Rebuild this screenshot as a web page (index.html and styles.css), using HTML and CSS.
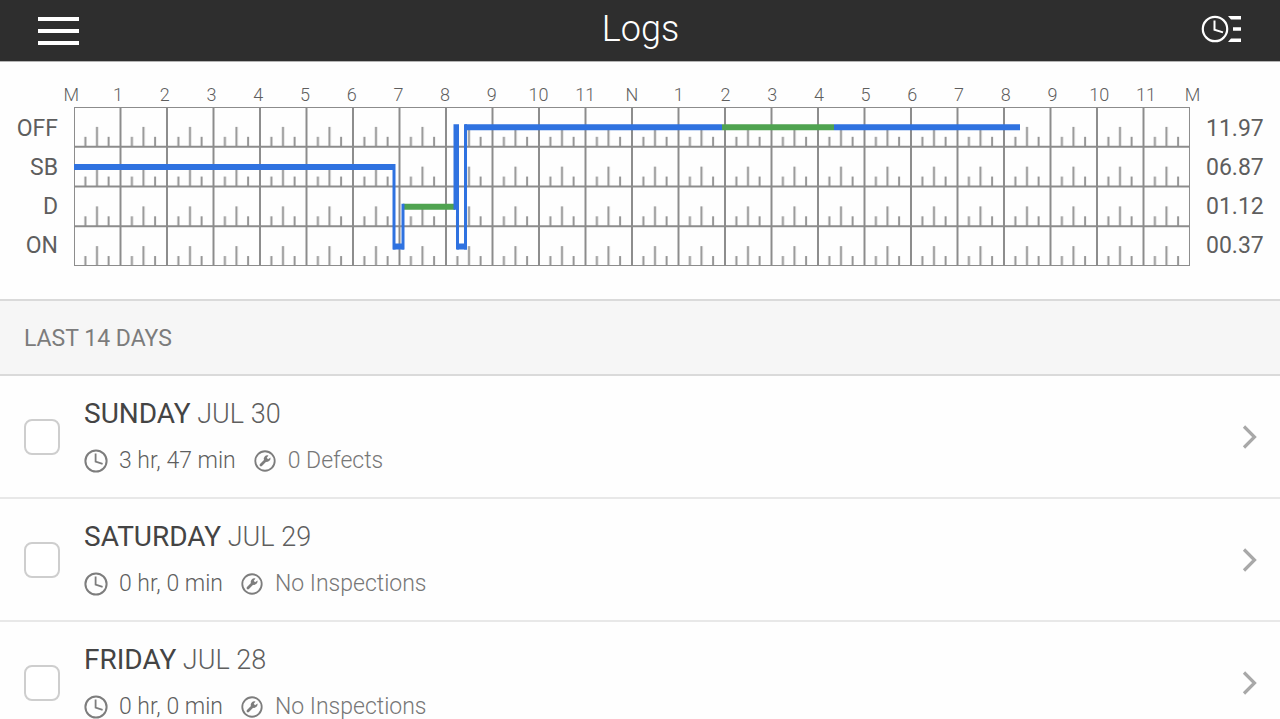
FILE: index.html
```html
<!DOCTYPE html>
<html lang="en">
  <head>
    <meta charset="UTF-8" />
    <meta name="viewport" content="width=device-width, initial-scale=1.0" />
    <title>Logs</title>
    <link rel="stylesheet" href="styles.css">
  </head>
  <body>
    <!-- Shared icons -->
    <svg class="icon-defs" aria-hidden="true">
      <symbol id="icon-clock" viewBox="0 0 24 24">
        <circle cx="12" cy="12" r="10.6" fill="none" stroke="currentColor" stroke-width="2" />
        <path d="M11.6 4.6V12.6L18.6 14.8" fill="none" stroke="currentColor" stroke-width="1.8" />
      </symbol>
      <symbol id="icon-wrench" viewBox="0 0 24 24">
        <circle cx="12" cy="12" r="10.6" fill="none" stroke="currentColor" stroke-width="2" />
        <path d="M7.6 16.4L13 11" fill="none" stroke="currentColor" stroke-width="3" stroke-linecap="round" />
        <path d="M15.8 5.9L13.9 8.5L15.3 10L18 8.2A4 4 0 0 1 12.4 12.6L10.9 11.2A4 4 0 0 1 15.8 5.9Z" fill="currentColor" />
      </symbol>
      <symbol id="icon-chevron" viewBox="0 0 16 26">
        <path d="M2 2.5L12.5 13L2 23.5" fill="none" stroke="currentColor" stroke-width="3.2" />
      </symbol>
    </svg>

    <header class="top-bar">
      <button class="menu-button" type="button" aria-label="Menu">
        <span></span>
        <span></span>
        <span></span>
      </button>
      <h1>Logs</h1>
      <button class="status-button" type="button" aria-label="Change status">
        <svg width="42" height="28" viewBox="0 0 42 28" fill="none">
          <circle cx="14" cy="14" r="12.2" stroke="#fff" stroke-width="2.2" />
          <path d="M13.5 5.5V14.8L22 17.4" stroke="#fff" stroke-width="2" />
          <path d="M27 1H40V4.5H30ZM32 12.2H40V15.8H32ZM30 23.5H40V27H27Z" fill="#fff" />
        </svg>
      </button>
    </header>

    <main>
      <section class="graph">
        <div class="hours">
          <span>M</span><span>1</span><span>2</span><span>3</span><span>4</span>
          <span>5</span><span>6</span><span>7</span><span>8</span><span>9</span>
          <span>10</span><span>11</span><span>N</span><span>1</span><span>2</span>
          <span>3</span><span>4</span><span>5</span><span>6</span><span>7</span>
          <span>8</span><span>9</span><span>10</span><span>11</span><span>M</span>
        </div>
        <div class="graph-body">
          <div class="duty-labels">
            <span>OFF</span>
            <span>SB</span>
            <span>D</span>
            <span>ON</span>
          </div>
          <svg class="chart" viewBox="0 0 1116 160" preserveAspectRatio="none" role="img" aria-label="Duty status by hour">
            <defs>
              <!-- one hour of one duty status -->
              <pattern id="hour-cell" width="46.5" height="40" patternUnits="userSpaceOnUse">
                <path class="tick" d="M11.4 30V40M23 20V40M34.6 30V40" />
                <path class="cell" d="M0 0H46.5V40H0Z" />
              </pattern>
            </defs>
            <rect width="1116" height="160" fill="url(#hour-cell)" />
            <g class="drive">
              <path d="M329 100.4H381M648 20.4H760" />
            </g>
            <g class="duty">
              <path d="M0 60.4H321M319 140.4H330M383 140.4H393M391 20.4H648M760 20.4H946" />
              <path class="change" d="M320 57.4V143.4M329 97.4V143.4M381 17.4V103.4M383.5 17.4V143.4M391.5 17.4V143.4" />
            </g>
          </svg>
          <div class="duty-totals">
            <span>11.97</span>
            <span>06.87</span>
            <span>01.12</span>
            <span>00.37</span>
          </div>
        </div>
      </section>

      <h2 class="list-title">LAST 14 DAYS</h2>

      <ul class="log-list">
        <li class="log">
          <input type="checkbox" aria-label="Select Sunday Jul 30" />
          <a href="#jul-30">
            <div class="log-info">
              <h3><b>SUNDAY</b> JUL 30</h3>
              <p>
                <svg class="icon"><use href="#icon-clock" /></svg>
                <span class="time">3 hr, 47 min</span>
                <svg class="icon small"><use href="#icon-wrench" /></svg>
                <span class="inspection">0 Defects</span>
              </p>
            </div>
            <svg class="chevron"><use href="#icon-chevron" /></svg>
          </a>
        </li>
        <li class="log">
          <input type="checkbox" aria-label="Select Saturday Jul 29" />
          <a href="#jul-29">
            <div class="log-info">
              <h3><b>SATURDAY</b> JUL 29</h3>
              <p>
                <svg class="icon"><use href="#icon-clock" /></svg>
                <span class="time">0 hr, 0 min</span>
                <svg class="icon small"><use href="#icon-wrench" /></svg>
                <span class="inspection">No Inspections</span>
              </p>
            </div>
            <svg class="chevron"><use href="#icon-chevron" /></svg>
          </a>
        </li>
        <li class="log">
          <input type="checkbox" aria-label="Select Friday Jul 28" />
          <a href="#jul-28">
            <div class="log-info">
              <h3><b>FRIDAY</b> JUL 28</h3>
              <p>
                <svg class="icon"><use href="#icon-clock" /></svg>
                <span class="time">0 hr, 0 min</span>
                <svg class="icon small"><use href="#icon-wrench" /></svg>
                <span class="inspection">No Inspections</span>
              </p>
            </div>
            <svg class="chevron"><use href="#icon-chevron" /></svg>
          </a>
        </li>
      </ul>
    </main>
  </body>
</html>
```
FILE: styles.css
```css
* {
  margin: 0;
  padding: 0;
  box-sizing: border-box;
}

body {
  font-family: Roboto, "Liberation Sans", sans-serif;
  background: #fefefe;
  color: #5e5e5e;
  height: 100vh;
  display: flex;
  flex-direction: column;
}

.icon-defs {
  display: none;
}

/* Header */
.top-bar {
  display: grid;
  grid-template-columns: 1fr auto 1fr;
  align-items: center;
  height: 62px;
  flex-shrink: 0;
  padding: 0 37px 0 38px;
  background: #2e2e2e;
  border-bottom: 1px solid #b4b4b4;
}

.top-bar h1 {
  color: #fff;
  font-size: 36px;
  font-weight: 300;
  line-height: 44px;
  padding-bottom: 4px;
}

.top-bar button {
  background: none;
  border: none;
  cursor: pointer;
}

.menu-button {
  display: flex;
  flex-direction: column;
  gap: 8px;
  width: 41px;
}

.menu-button span {
  height: 4px;
  background: #fff;
}

.status-button {
  justify-self: end;
  padding-bottom: 3px;
}

.status-button svg {
  display: block;
}

main {
  flex: 1;
  min-height: 0;
  overflow-y: auto;
  scrollbar-width: none;
}

/* Duty status graph */
.graph {
  padding: 21px 0 33px;
}

.hours {
  display: grid;
  grid-template-columns: repeat(25, 1fr);
  padding: 0 64px 1px 48px;
  font-size: 18px;
  font-weight: 300;
  line-height: 23px;
  text-align: center;
}

.graph-body {
  display: grid;
  grid-template-columns: 74px 1fr 90px;
  height: 159px;
}

.duty-labels,
.duty-totals {
  display: grid;
  grid-template-rows: repeat(4, 1fr);
  align-items: center;
  padding: 2px 16px 0;
  font-size: 23px;
  line-height: 28px;
}

.duty-labels {
  text-align: right;
}

.chart {
  width: 100%;
  height: 159px;
}

.chart path {
  fill: none;
}

.cell {
  stroke: #8c8c8c;
  stroke-width: 2;
}

.tick {
  stroke: #959595;
  stroke-width: 2;
}

.duty {
  stroke: #2f72e0;
  stroke-width: 6;
}

.drive {
  stroke: #4fa350;
  stroke-width: 6;
}

.change {
  stroke-width: 3;
}

/* Log list */
.list-title {
  background: #f6f6f6;
  border: solid #dadada;
  border-width: 2px 0;
  padding: 25px 24px 23px;
  color: #7c7c7c;
  font-size: 23px;
  font-weight: 400;
  line-height: 25px;
}

.log-list {
  list-style: none;
}

.log {
  display: flex;
  align-items: center;
  gap: 24px;
  height: 123px;
  padding: 0 22px 0 24px;
  border-bottom: 2px solid #e8e8e8;
}

.log input {
  appearance: none;
  width: 36px;
  height: 36px;
  border: 2px solid #cecece;
  border-radius: 8px;
  background: #fff;
}

.log input:checked {
  background: #2f72e0;
}

.log a {
  flex: 1;
  display: flex;
  align-items: center;
  justify-content: space-between;
  color: inherit;
  text-decoration: none;
}

.log-info {
  display: flex;
  flex-direction: column;
  gap: 19px;
  padding-bottom: 3px;
}

.log h3 {
  font-size: 27px;
  font-weight: 300;
  line-height: 32px;
}

.log b {
  color: #444;
  font-size: 28px;
  font-weight: 400;
}

.log p {
  display: flex;
  align-items: center;
  font-size: 23px;
  font-weight: 300;
  line-height: 24px;
}

.icon {
  width: 24px;
  height: 24px;
  margin-right: 11px;
  color: #7d7d7d;
}

.icon.small {
  width: 22px;
  height: 22px;
  margin-right: 12px;
}

.time {
  margin-right: 18px;
}

.inspection {
  color: #777;
}

.chevron {
  width: 16px;
  height: 26px;
  color: #a8a8a8;
}
```
